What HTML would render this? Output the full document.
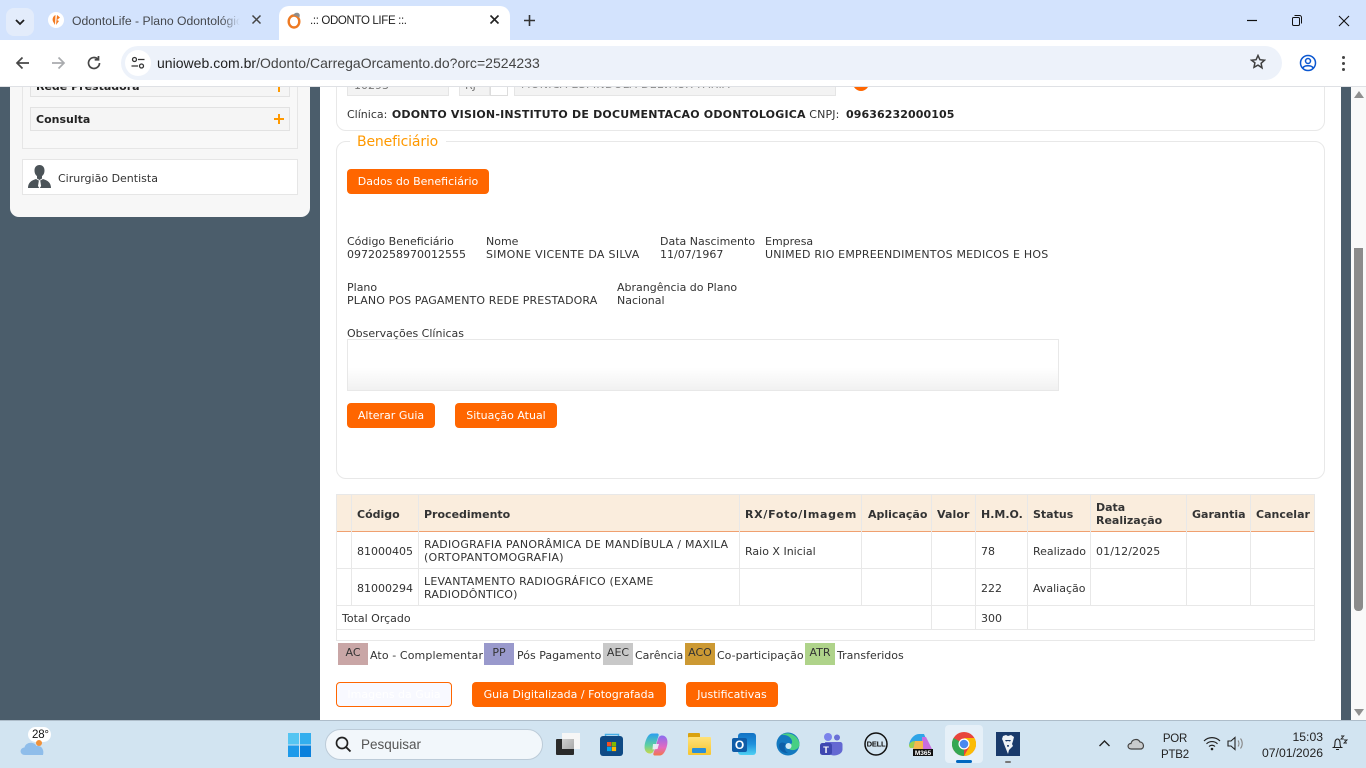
<!DOCTYPE html>
<html lang="pt"><head><meta charset="utf-8"><title>.:: ODONTO LIFE ::.</title>
<style>
*{box-sizing:border-box}
html,body{margin:0;padding:0;width:1366px;height:768px;overflow:hidden;background:#fff}
body{position:relative;font-family:"DejaVu Sans",Verdana,sans-serif;font-size:11px;color:#333}
.a,.t{position:absolute}
.t{white-space:nowrap;line-height:13px}
.b{font-weight:bold}
.btn{position:absolute;background:#f60;color:#fff;border-radius:4px;height:25px;line-height:25px;text-align:center;font-size:11px;white-space:nowrap}
.ln{position:absolute;background:#e8e8e8}
.c{position:absolute;height:22px;width:30px;text-align:center;line-height:20px;font-size:11px;color:#333}
.ui{font-family:"Liberation Sans",sans-serif}
svg{position:absolute;display:block}
</style></head><body>

<!-- page background -->
<div class="a" style="left:0;top:86px;width:320px;height:635px;background:#4b5d6b"></div>
<div class="a" style="left:1341px;top:86px;width:10px;height:635px;background:#4b5d6b"></div>
<div class="a" style="left:1351px;top:86px;width:15px;height:635px;background:#f9f9f9"></div>
<div class="a" style="left:1354px;top:248px;width:9px;height:363px;background:#8b8b8b;border-radius:0 0 4px 4px"></div>
<div class="a" style="left:1354px;top:91px;width:0;height:0;border:5px solid transparent;border-top:0;border-bottom:7px solid #8f8f8f"></div>
<div class="a" style="left:1354px;top:709px;width:0;height:0;border:5px solid transparent;border-bottom:0;border-top:7px solid #8f8f8f"></div>

<!-- sidebar -->
<div class="a" style="left:10px;top:80px;width:300px;height:137px;background:#f7f7f7;border-radius:0 0 9px 9px"></div>
<div class="a" style="left:22px;top:80px;width:276px;height:69px;border:1px solid #e6e6e6;background:#f8f8f8"></div>
<div class="a" style="left:30px;top:80px;width:260px;height:17px;background:#f5f5f5;border:1px solid #e2e2e2"></div>
<div class="t b" style="left:36px;top:80px;color:#222">Rede Prestadora</div>
<div class="a" style="left:278px;top:80px;width:2px;height:12px;background:#f90"></div>
<div class="a" style="left:30px;top:107px;width:260px;height:24px;background:#f5f5f5;border:1px solid #e2e2e2"></div>
<div class="t b" style="left:36px;top:113px;color:#222">Consulta</div>
<div class="a" style="left:274px;top:118px;width:10px;height:2px;background:#f90"></div>
<div class="a" style="left:278px;top:114px;width:2px;height:10px;background:#f90"></div>
<div class="a" style="left:22px;top:159px;width:276px;height:36px;border:1px solid #e6e6e6;background:#fff"></div>
<svg style="left:27px;top:164px" width="26" height="26" viewBox="0 0 26 26"><path d="M12.500 1c3 0 5 2 5 5.500 0 2.500-1 4.500-2.500 5.500v2.500l-2.500 1.500-2.500-1.500V12C8.500 11 7.500 9 7.500 6.500 7.500 3 9.500 1 12.500 1z" fill="#4b5358"/><path d="M1 24c0-5.500 3.500-7.500 8-9l3.500 2 3.500-2c4.500 1.500 8 3.500 8 9z" fill="#4b5358"/><path d="M11.800 17h1.500l.8 5-1.600 2.500-1.500-2.500z" fill="#fff"/></svg>
<div class="t" style="left:58px;top:172px">Cirurgião Dentista</div>

<!-- top card -->
<div class="a" style="left:336px;top:70px;width:989px;height:61px;border:1px solid #e8e8e8;border-radius:0 0 10px 10px"></div>
<div class="a" style="left:347px;top:80px;width:102px;height:16px;background:#f3f3f3;border:1px solid #e5e5e5"></div>
<div class="t" style="left:354px;top:79px;color:#777">10293</div>
<div class="a" style="left:459px;top:80px;width:31px;height:16px;background:#f3f3f3;border:1px solid #e5e5e5"></div>
<div class="t" style="left:465px;top:79px;color:#777">RJ</div>
<div class="a" style="left:490px;top:80px;width:18px;height:16px;background:#fff;border:1px solid #ddd"></div>
<div class="a" style="left:514px;top:80px;width:322px;height:16px;background:#f3f3f3;border:1px solid #e5e5e5"></div>
<div class="t" style="left:521px;top:78px;color:#888;letter-spacing:.3px">MONICA ESPINDOLA DELVAUX FARIA</div>
<div class="a" style="left:853px;top:75px;width:16px;height:16px;border-radius:50%;background:#f60"></div>
<div class="t" style="left:347px;top:108px">Clínica: <b style="color:#222;letter-spacing:.2px;margin-left:1px">ODONTO VISION-INSTITUTO DE DOCUMENTACAO ODONTOLOGICA</b> <span style="letter-spacing:.15px">CNPJ:</span> <b style="color:#222;margin-left:3px;letter-spacing:.1px">09636232000105</b></div>

<!-- Beneficiario fieldset -->
<div class="a" style="left:336px;top:141px;width:989px;height:338px;border:1px solid #e8e8e8;border-radius:10px"></div>
<div class="a" style="left:350px;top:136px;width:96px;height:10px;background:#fff"></div>
<div class="t" style="left:357px;top:134px;font-size:14px;line-height:16px;color:#f90;letter-spacing:-.15px">Beneficiário</div>
<div class="btn" style="left:347px;top:169px;width:142px">Dados do Beneficiário</div>

<div class="t" style="left:347px;top:235px">Código Beneficiário<br>09720258970012555</div>
<div class="t" style="left:486px;top:235px">Nome<br><span style="letter-spacing:.3px">SIMONE VICENTE DA SILVA</span></div>
<div class="t" style="left:660px;top:235px">Data Nascimento<br>11/07/1967</div>
<div class="t" style="left:765px;top:235px">Empresa<br><span style="letter-spacing:.2px">UNIMED RIO EMPREENDIMENTOS MEDICOS E HOS</span></div>
<div class="t" style="left:347px;top:281px">Plano<br><span style="letter-spacing:.11px">PLANO POS PAGAMENTO REDE PRESTADORA</span></div>
<div class="t" style="left:617px;top:281px">Abrangência do Plano<br>Nacional</div>
<div class="t" style="left:347px;top:327px">Observações Clínicas</div>
<div class="a" style="left:347px;top:339px;width:712px;height:52px;border:1px solid #e8e8e8;background:linear-gradient(#fff 55%,#f1f1f1)"></div>
<div class="btn" style="left:347px;top:403px;width:88px">Alterar Guia</div>
<div class="btn" style="left:455px;top:403px;width:102px">Situação Atual</div>

<!-- table -->
<div class="a" style="left:337px;top:495px;width:978px;height:36px;background:#faeddd"></div>
<div class="a" style="left:337px;top:531px;width:978px;height:1px;background:#f0a070"></div>
<div class="ln" style="left:336px;top:494px;width:979px;height:1px"></div>
<div class="ln" style="left:336px;top:568px;width:979px;height:1px"></div>
<div class="ln" style="left:336px;top:605px;width:979px;height:1px"></div>
<div class="ln" style="left:336px;top:629px;width:979px;height:1px"></div>
<div class="ln" style="left:336px;top:640px;width:979px;height:1px"></div>
<div class="ln" style="left:336px;top:494px;width:1px;height:147px"></div>
<div class="ln" style="left:1314px;top:494px;width:1px;height:147px"></div>
<div class="ln" style="left:351px;top:495px;width:1px;height:110px"></div>
<div class="ln" style="left:418px;top:495px;width:1px;height:110px"></div>
<div class="ln" style="left:739px;top:495px;width:1px;height:110px"></div>
<div class="ln" style="left:861px;top:495px;width:1px;height:110px"></div>
<div class="ln" style="left:931px;top:495px;width:1px;height:134px"></div>
<div class="ln" style="left:975px;top:495px;width:1px;height:134px"></div>
<div class="ln" style="left:1027px;top:495px;width:1px;height:134px"></div>
<div class="ln" style="left:1090px;top:495px;width:1px;height:110px"></div>
<div class="ln" style="left:1186px;top:495px;width:1px;height:110px"></div>
<div class="ln" style="left:1250px;top:495px;width:1px;height:110px"></div>

<div class="t b" style="left:357px;top:508px">Código</div>
<div class="t b" style="left:424px;top:508px">Procedimento</div>
<div class="t b" style="left:745px;top:508px;letter-spacing:.7px">RX/Foto/Imagem</div>
<div class="t b" style="left:868px;top:508px">Aplicação</div>
<div class="t b" style="left:937px;top:508px;letter-spacing:.1px">Valor</div>
<div class="t b" style="left:981px;top:508px">H.M.O.</div>
<div class="t b" style="left:1033px;top:508px">Status</div>
<div class="t b" style="left:1096px;top:501px">Data<br>Realização</div>
<div class="t b" style="left:1192px;top:508px">Garantia</div>
<div class="t b" style="left:1256px;top:508px">Cancelar</div>

<div class="t" style="left:357px;top:545px">81000405</div>
<div class="t" style="left:424px;top:538px;letter-spacing:.25px">RADIOGRAFIA PANORÂMICA DE MANDÍBULA / MAXILA<br>(ORTOPANTOMOGRAFIA)</div>
<div class="t" style="left:745px;top:545px">Raio X Inicial</div>
<div class="t" style="left:981px;top:545px">78</div>
<div class="t" style="left:1033px;top:545px">Realizado</div>
<div class="t" style="left:1096px;top:545px;letter-spacing:.1px">01/12/2025</div>
<div class="t" style="left:357px;top:582px">81000294</div>
<div class="t" style="left:424px;top:575px;letter-spacing:.2px">LEVANTAMENTO RADIOGRÁFICO (EXAME<br>RADIODÔNTICO)</div>
<div class="t" style="left:981px;top:582px">222</div>
<div class="t" style="left:1033px;top:582px">Avaliação</div>
<div class="t" style="left:342px;top:612px">Total Orçado</div>
<div class="t" style="left:981px;top:612px">300</div>

<!-- legend -->
<div class="c" style="left:338px;top:643px;background:#c9a6a6">AC</div>
<div class="t" style="left:370px;top:649px;letter-spacing:.1px">Ato - Complementar</div>
<div class="c" style="left:484px;top:643px;background:#9999cc">PP</div>
<div class="t" style="left:517px;top:649px">Pós Pagamento</div>
<div class="c" style="left:603px;top:643px;background:#c8c8c8">AEC</div>
<div class="t" style="left:635px;top:649px">Carência</div>
<div class="c" style="left:685px;top:643px;background:#cc9933">ACO</div>
<div class="t" style="left:717px;top:649px">Co-participação</div>
<div class="c" style="left:805px;top:643px;background:#afd38a">ATR</div>
<div class="t" style="left:837px;top:649px">Transferidos</div>

<div class="btn" style="left:336px;top:682px;width:116px;background:#f8f9ff;border:1px solid #f60;line-height:23px;color:#fff">Imagens da Guia</div>
<div class="btn" style="left:472px;top:682px;width:194px">Guia Digitalizada / Fotografada</div>
<div class="btn" style="left:686px;top:682px;width:92px">Justificativas</div>

<!-- chrome -->
<div class="a ui" style="left:0;top:0;width:1366px;height:40px;background:#d3e3fd"></div>
<div class="a" style="left:6px;top:8px;width:28px;height:28px;border-radius:8px;background:#e3ecfb"></div>
<svg style="left:14px;top:18px" width="12" height="8" viewBox="0 0 12 8"><path d="M2 2l4 4 4-4" fill="none" stroke="#1f1f1f" stroke-width="1.800"/></svg>
<svg style="left:48px;top:12px" width="16" height="16" viewBox="0 0 16 16"><circle cx="8" cy="8" r="8" fill="#fff"/><path d="M7.500 3C5 4 4 7 5 9.500l2 3.500zM9 3l3 2.500L9 8l2 1-3 4z" fill="#f47a20"/></svg>
<div class="t ui" style="left:72px;top:13px;width:168px;overflow:hidden;font-size:12.200px;line-height:16px;color:#45484d">OdontoLife - Plano Odontológico</div>
<div class="a" style="left:222px;top:12px;width:18px;height:16px;background:linear-gradient(90deg,rgba(211,227,253,0),#d3e3fd)"></div>
<svg style="left:251px;top:14px" width="11" height="11" viewBox="0 0 11 11"><path d="M1.500 1.500l8 8M9.500 1.500l-8 8" stroke="#444" stroke-width="1.500"/></svg>
<div class="a" style="left:279px;top:6px;width:231px;height:36px;background:#fff;border-radius:10px 10px 0 0"></div>
<svg style="left:286px;top:11px" width="18" height="18" viewBox="0 0 18 18"><ellipse cx="8" cy="10.500" rx="5.300" ry="6" fill="none" stroke="#ee7a22" stroke-width="2.400"/><path d="M7 4.500C8 2 11 1 13 2.500c1 1 1 3 0 4.500-1-1.500-3-2.500-6-2.500z" fill="#8d8d8d"/></svg>
<div class="t ui" style="left:310px;top:13px;font-size:11.500px;line-height:16px;color:#1f1f1f;letter-spacing:-.35px">.:: ODONTO LIFE ::.</div>
<svg style="left:489px;top:14px" width="11" height="11" viewBox="0 0 11 11"><path d="M1.500 1.500l8 8M9.500 1.500l-8 8" stroke="#222" stroke-width="1.600"/></svg>
<svg style="left:523px;top:14px" width="13" height="13" viewBox="0 0 13 13"><path d="M6.500 1v11M1 6.500h11" stroke="#333" stroke-width="1.600"/></svg>
<svg style="left:1246px;top:19px" width="12" height="3" viewBox="0 0 12 3"><path d="M1 1.500h10" stroke="#111" stroke-width="1.200"/></svg>
<svg style="left:1291px;top:14px" width="12" height="13" viewBox="0 0 12 13"><rect x="1.500" y="3.500" width="7" height="8" rx="1.200" fill="none" stroke="#111"/><path d="M3.500 1.500h5a2 2 0 0 1 2 2v6" fill="none" stroke="#111"/></svg>
<svg style="left:1338px;top:15px" width="12" height="12" viewBox="0 0 12 12"><path d="M1 1l10 10M11 1L1 11" stroke="#111" stroke-width="1.100"/></svg>

<div class="a" style="left:0;top:40px;width:1366px;height:46px;background:#fff;border-radius:9px 9px 0 0"></div>
<div class="a" style="left:0;top:86px;width:1366px;height:1px;background:#dfe1e5"></div>
<svg style="left:14px;top:54px" width="18" height="18" viewBox="0 0 18 18"><path d="M15 9H3.500M8.500 3.500L3 9l5.500 5.500" fill="none" stroke="#474747" stroke-width="1.700"/></svg>
<svg style="left:49px;top:54px" width="18" height="18" viewBox="0 0 18 18"><path d="M3 9h11.500M9.500 3.500L15 9l-5.500 5.500" fill="none" stroke="#a9abae" stroke-width="1.700"/></svg>
<svg style="left:85px;top:54px" width="18" height="18" viewBox="0 0 18 18"><path d="M14.500 9a5.500 5.500 0 1 1-1.700-4M13.500 2v3.800H9.700" fill="none" stroke="#474747" stroke-width="1.700"/></svg>
<div class="a" style="left:121px;top:46px;width:1161px;height:34px;border-radius:17px;background:#edf2fa"></div>
<div class="a" style="left:125px;top:50px;width:26px;height:26px;border-radius:50%;background:#fff"></div>
<svg style="left:130px;top:55px" width="16" height="16" viewBox="0 0 16 16"><circle cx="4.500" cy="4.500" r="2" fill="none" stroke="#333" stroke-width="1.300"/><path d="M8 4.500h6.500M1.500 11H8" stroke="#333" stroke-width="1.300"/><circle cx="11.500" cy="11" r="2" fill="none" stroke="#333" stroke-width="1.300"/></svg>
<div class="t ui" style="left:157px;top:54px;font-size:14px;line-height:18px;color:#444;letter-spacing:.02px"><span style="color:#1f1f1f">unioweb.com.br</span>/Odonto/CarregaOrcamento.do?orc=2524233</div>
<svg style="left:1250px;top:54px" width="16" height="16" viewBox="0 0 16 16"><path d="M8 1.500l1.900 4.200 4.600.500-3.400 3.100.9 4.500L8 11.100l-4 2.200.9-4.500L1.500 6.200l4.600-.500z" fill="none" stroke="#3f3f3f" stroke-width="1.500"/></svg>
<svg style="left:1299px;top:54px" width="18" height="18" viewBox="0 0 18 18"><circle cx="9" cy="9" r="7.500" fill="none" stroke="#0b57d0" stroke-width="1.500"/><circle cx="9" cy="7" r="2.500" fill="none" stroke="#0b57d0" stroke-width="1.500"/><path d="M4 14c1-3 9-3 10 0" fill="none" stroke="#0b57d0" stroke-width="1.500"/></svg>
<div class="a" style="left:1342px;top:56px;width:3px;height:3px;border-radius:50%;background:#444;box-shadow:0 6px 0 #444,0 12px 0 #444"></div>

<!-- taskbar -->
<div class="a" style="left:0;top:720px;width:1366px;height:48px;background:#d2e4f1;border-top:1px solid #aebdca"></div>
<svg style="left:19px;top:727px" width="34" height="30" viewBox="0 0 34 30"><rect x="9" y="0" width="23" height="15" rx="7.500" fill="#fff"/><circle cx="20" cy="16" r="3" fill="#f0913a"/><path d="M6 28c-5.500 0-6-7-.5-7.500C6.500 15 15 14 17.500 19c5-1 8 4 6.500 9z" fill="#8fbdea"/></svg>
<div class="t ui" style="left:32px;top:729px;font-size:11.500px;color:#111;letter-spacing:-.2px">28°</div>
<svg style="left:288px;top:733px" width="23" height="24" viewBox="0 0 23 24"><rect width="11" height="11.500" fill="#55c5f2"/><rect x="12" width="11" height="11.500" fill="#33aeee"/><rect y="12.500" width="11" height="11.500" fill="#1d9aea"/><rect x="12" y="12.500" width="11" height="11.500" fill="#0a80dc"/></svg>
<div class="a" style="left:325px;top:729px;width:218px;height:31px;border-radius:16px;background:#f2f7fb;border:1px solid #bccbd8"></div>
<svg style="left:335px;top:736px" width="17" height="17" viewBox="0 0 17 17"><circle cx="7" cy="7" r="5.500" fill="none" stroke="#222" stroke-width="1.700"/><path d="M11 11l4.500 4.500" stroke="#222" stroke-width="1.900"/></svg>
<div class="t ui" style="left:361px;top:736px;font-size:13.500px;line-height:17px;color:#555">Pesquisar</div>
<div class="a" style="left:556px;top:739px;width:18px;height:16px;background:#2a2a2a;border-radius:1px"></div>
<div class="a" style="left:562px;top:733px;width:18px;height:16px;background:#f6f6f6"></div>
<div class="a" style="left:562px;top:739px;width:12px;height:10px;background:linear-gradient(135deg,#cfcfcf,#a9a9a9)"></div>
<svg style="left:600px;top:732px" width="23" height="25" viewBox="0 0 23 25"><path d="M5.500 5.500V2.500h13v3" fill="none" stroke="#45aee6" stroke-width="1.500"/><rect x="0" y="4" width="23" height="20" rx="3" fill="#0f4a85"/><rect x="7" y="10" width="4.300" height="4.300" fill="#f25022"/><rect x="11.800" y="10" width="4.300" height="4.300" fill="#7fba00"/><rect x="7" y="14.800" width="4.300" height="4.300" fill="#00a4ef"/><rect x="11.800" y="14.800" width="4.300" height="4.300" fill="#ffb900"/></svg>
<svg style="left:644px;top:733px" width="24" height="23" viewBox="0 0 24 23"><defs><linearGradient id="cp1" x1="0" y1="0" x2="0" y2="1"><stop offset="0" stop-color="#2b9ff0"/><stop offset=".6" stop-color="#5fd0a0"/><stop offset="1" stop-color="#c8d84a"/></linearGradient><linearGradient id="cp2" x1="0" y1="0" x2="0" y2="1"><stop offset="0" stop-color="#8a6cf0"/><stop offset=".6" stop-color="#e46ac0"/><stop offset="1" stop-color="#f2764a"/></linearGradient></defs><path d="M8 .5h5c1.500 0 2 1 1.500 2.500L10 17c-.8 2.500-2 3.500-4 3.500C2 20.500.2 17 .6 13 1 8 4 .5 8 .5z" fill="url(#cp1)"/><path d="M16 22.500h-5c-1.500 0-2-1-1.500-2.500L14 6c.8-2.500 2-3.500 4-3.500 4 0 5.800 3.500 5.400 7.500C23 15 20 22.500 16 22.500z" fill="url(#cp2)"/><path d="M9 11h6l-1.500 5-5 .5z" fill="#eef3fb" opacity=".9"/></svg>
<div class="a" style="left:688px;top:733px;width:12px;height:6px;background:#d9a210;border-radius:1px"></div>
<div class="a" style="left:688px;top:737px;width:23px;height:18px;background:linear-gradient(#ffe27a,#f7c52f);border-radius:1px"></div>
<div class="a" style="left:692px;top:748px;width:14px;height:5px;background:#2a8fd8;border-radius:1px"></div>
<div class="a" style="left:738px;top:733px;width:18px;height:22px;background:linear-gradient(#1272c4 0,#1e90dc 50%,#4fd0f4 100%);border-radius:3px"></div>
<div class="a ui b" style="left:732px;top:738px;width:15px;height:14px;background:#0f5ca8;color:#fff;text-align:center;font-size:12px;line-height:14px;border-radius:2px">O</div>
<svg style="left:776px;top:732px" width="24" height="24" viewBox="0 0 24 24"><circle cx="12" cy="12" r="11.500" fill="#1479c0"/><path d="M23.500 12.500C23 4 13 -1.500 5 3 11 2 17 6 16 11c-1 2-4 2.500-6 1 0 5 7 8.500 12 4 1-1 1.500-2.500 1.500-3.500z" fill="#48cf84"/><path d="M10 12c-2 2-2 7 2 9-5 .5-9-3-9-7 0-3 3-5 7-2z" fill="#0c5fa8"/><circle cx="12.500" cy="14" r="3" fill="#cfe9f4"/></svg>
<svg style="left:819px;top:732px" width="24" height="24" viewBox="0 0 24 24"><circle cx="9" cy="5" r="4" fill="#7b83eb"/><circle cx="18" cy="5.500" r="3" fill="#6a70d6"/><path d="M6 10h15c1.500 0 2.500 1 2.500 2.500v5c0 4-5 6-8.500 6s-6-2-6.500-4z" fill="#6468d2"/><rect x="1" y="11" width="12" height="12" rx="2.500" fill="#3f47b0"/><text x="7" y="21" font-family="Liberation Sans,sans-serif" font-size="9.500" font-weight="bold" fill="#fff" text-anchor="middle">T</text></svg>
<svg style="left:864px;top:732px" width="24" height="24" viewBox="0 0 24 24"><circle cx="12" cy="12" r="11" fill="none" stroke="#111" stroke-width="1.500"/><text x="12" y="14.700" font-family="Liberation Sans,sans-serif" font-size="7.600" font-weight="bold" fill="#111" text-anchor="middle" letter-spacing="-.3">DELL</text></svg>
<svg style="left:908px;top:733px" width="25" height="23" viewBox="0 0 25 23"><path d="M1 13C1 7 6 1 11 1h5l3 7H9l-3 7H3z" fill="#2fa4e7"/><path d="M1 13c0-3 3-5 6-5l-2 7H2z" fill="#9bd24c"/><path d="M14 4h4l6 12h-10z" fill="#c76de0"/><path d="M7 8h8v8H5z" fill="#f4b94e"/><rect x="5" y="16" width="20" height="7" fill="#111"/><text x="15" y="22" font-family="Liberation Sans,sans-serif" font-size="6.500" font-weight="bold" fill="#fff" text-anchor="middle">M365</text></svg>
<div class="a" style="left:945px;top:725px;width:38px;height:38px;border-radius:4px;background:#e6f0f8"></div>
<svg style="left:952px;top:732px" width="24" height="24" viewBox="0 0 24 24"><circle cx="12" cy="12" r="12" fill="#e8453c"/><path d="M12 12L1.600 6A12 12 0 0 0 12 24z" fill="#34a853"/><path d="M12 6h10.400A12 12 0 0 1 12 24l5.200-9z" fill="#fbbc05"/><circle cx="12" cy="12" r="5.500" fill="#fff"/><circle cx="12" cy="12" r="4.300" fill="#4a88ee"/></svg>
<div class="a" style="left:956px;top:760px;width:16px;height:3px;border-radius:2px;background:#0067c0"></div>
<svg style="left:996px;top:732px" width="24" height="24" viewBox="0 0 24 24"><rect width="24" height="24" fill="#193a6b"/><path d="M7 4l3-1 2 1 3-1 3 2-1 4-1 3 1 2-2 2-2 2-1 4-2-5-2-5-1-3-1-2z" fill="#eef2f7"/><path d="M9 8h6l-1 1.500-2-.5-2 .5zM11 13h2l-.5 2h-1z" fill="#193a6b"/></svg>
<div class="a" style="left:1005px;top:761px;width:6px;height:2px;border-radius:1px;background:#777"></div>
<svg style="left:1098px;top:739px" width="13" height="9" viewBox="0 0 13 9"><path d="M1.500 7l5-5 5 5" fill="none" stroke="#222" stroke-width="1.400"/></svg>
<svg style="left:1127px;top:736px" width="18" height="15" viewBox="0 0 18 15"><path d="M4.500 13C0 13 0 7.500 4 7.500 5 3 11 2 13 6c4 0 5 7 .5 7z" fill="#c9cbcd" stroke="#444" stroke-width="1.200"/></svg>
<div class="t ui" style="left:1153px;top:732px;width:44px;text-align:center;font-size:11.500px;line-height:15.500px;color:#222;letter-spacing:-.2px">POR<br>PTB2</div>
<svg style="left:1203px;top:736px" width="18" height="15" viewBox="0 0 18 15"><path d="M1 5c4.500-4.500 11.500-4.500 16 0M3.500 7.800c3-3 8-3 11 0M6 10.500c1.700-1.700 4.300-1.700 6 0" fill="none" stroke="#222" stroke-width="1.200"/><circle cx="9" cy="13" r="1.300" fill="#222"/></svg>
<svg style="left:1227px;top:736px" width="17" height="15" viewBox="0 0 17 15"><path d="M1 5h3l4-3.500v12L4 10H1z" fill="none" stroke="#222" stroke-width="1.100"/><path d="M11 4.500c1.300 1.500 1.300 4.500 0 6M13.500 2.500c2.300 3 2.300 7 0 10" fill="none" stroke="#888" stroke-width="1.100"/></svg>
<div class="t ui" style="left:1251px;top:730px;width:72px;text-align:right;font-size:12.200px;line-height:15.500px;color:#222">15:03<br>07/01/2026</div>
<svg style="left:1331px;top:735px" width="17" height="17" viewBox="0 0 17 17"><path d="M1.500 12.500h10M3 12.500c1-1.500 1-3 1-5 0-2 1.200-3.500 2.500-3.500S9 5.500 9 7.500c0 2 0 3.500 1 5M5 14.500h3" fill="none" stroke="#222" stroke-width="1.100"/><path d="M10 1h2.800L10 4h2.800M13 5h3l-3 3h3" fill="none" stroke="#222" stroke-width=".9"/></svg>
</body></html>
